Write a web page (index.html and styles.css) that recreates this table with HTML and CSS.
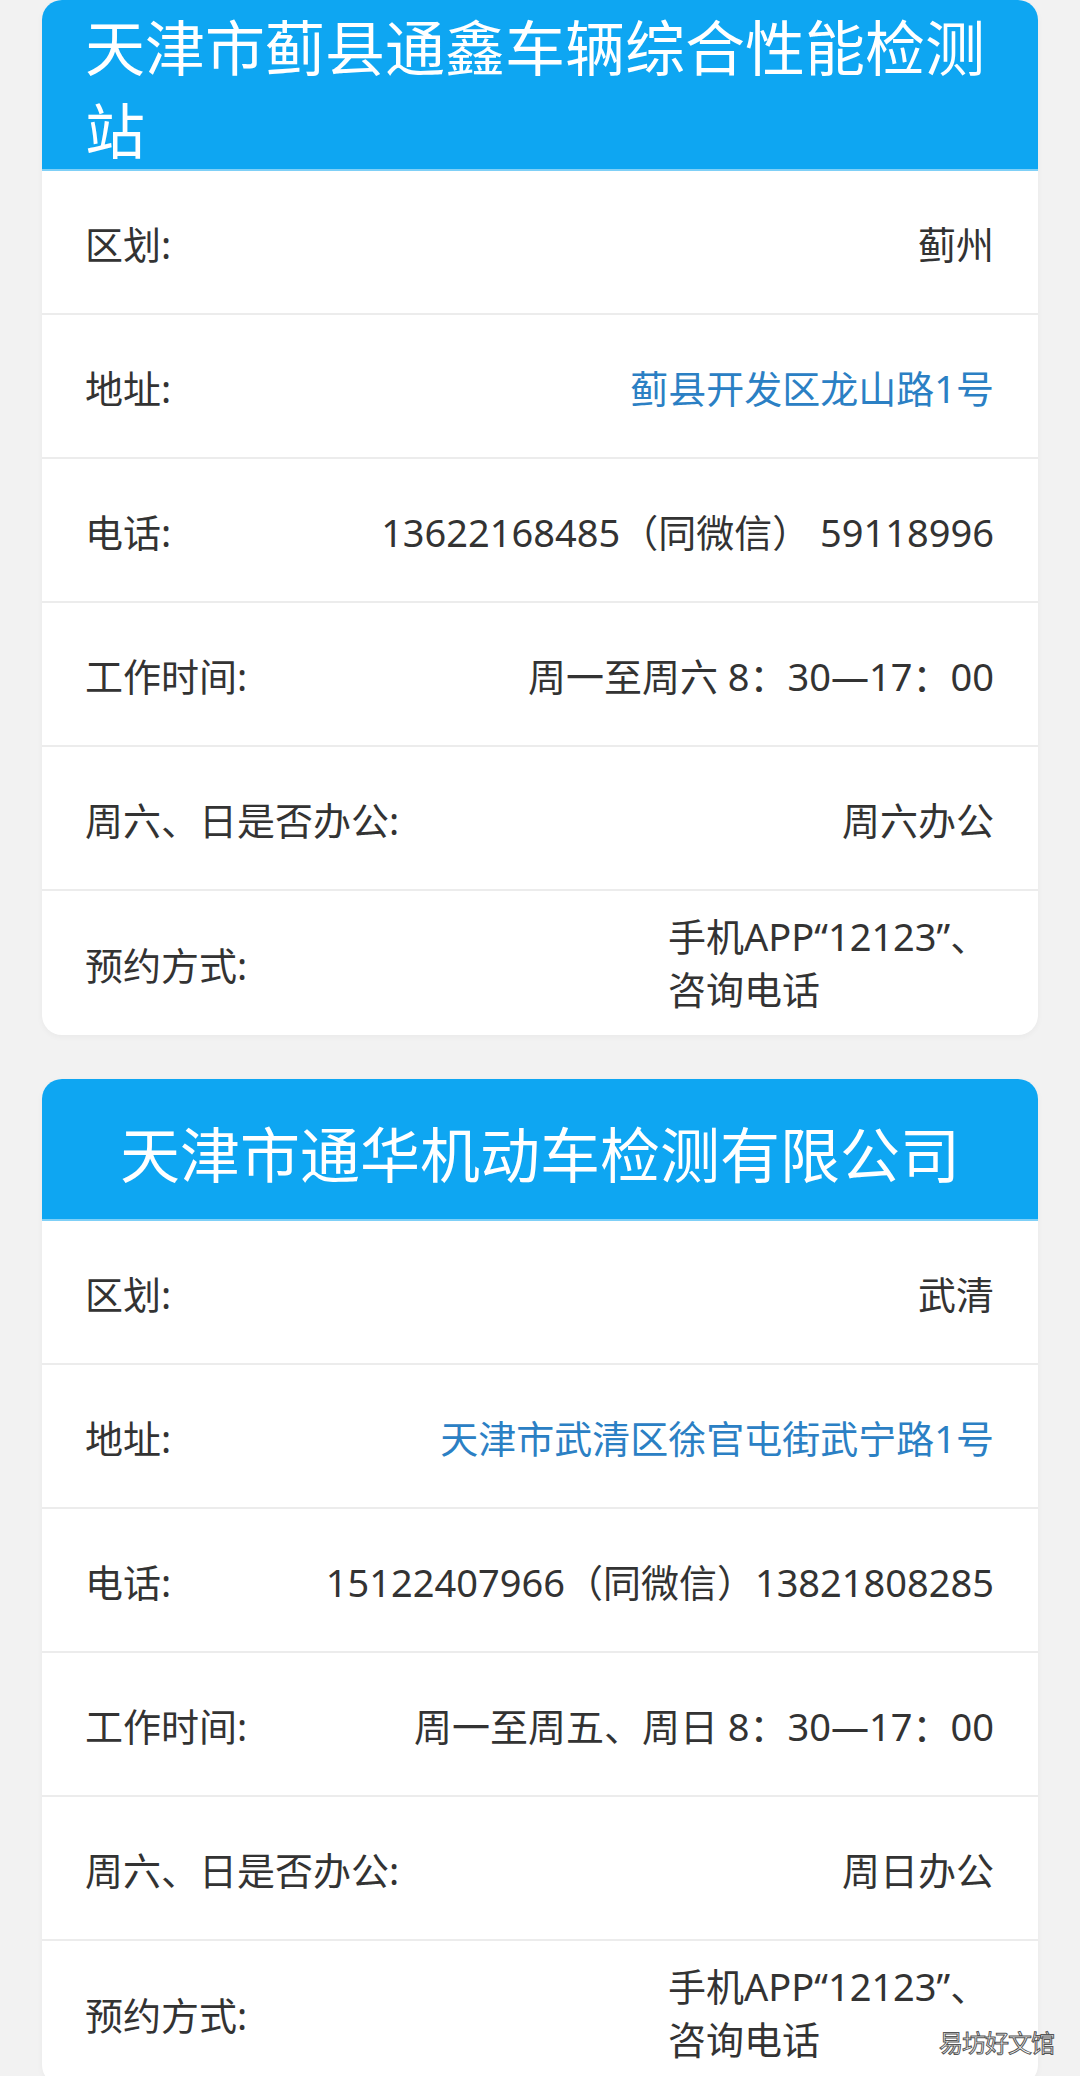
FILE: index.html
```html
<!DOCTYPE html>
<html lang="zh-CN">
<head>
    <meta charset="UTF-8">
    <meta name="viewport" content="width=device-width, initial-scale=1.0">
    <title>天津机动车检测站</title>
    <link rel="stylesheet" href="styles.css">
</head>
<body>
    <div class="list">
        <div class="station">
            <div class="station-title wrap">天津市蓟县通鑫车辆综合性能检测站</div>
            <div class="row"><span class="label">区划:</span><span class="value">蓟州</span></div>
            <div class="row"><span class="label">地址:</span><span class="value link">蓟县开发区龙山路1号</span></div>
            <div class="row"><span class="label">电话:</span><span class="value">13622168485（同微信） 59118996</span></div>
            <div class="row"><span class="label">工作时间:</span><span class="value">周一至周六 8：30—17：00</span></div>
            <div class="row"><span class="label">周六、日是否办公:</span><span class="value">周六办公</span></div>
            <div class="row"><span class="label">预约方式:</span><span class="value multi">手机APP“12123”、咨询电话</span></div>
        </div>

        <div class="station">
            <div class="station-title">天津市通华机动车检测有限公司</div>
            <div class="row"><span class="label">区划:</span><span class="value">武清</span></div>
            <div class="row"><span class="label">地址:</span><span class="value link">天津市武清区徐官屯街武宁路1号</span></div>
            <div class="row"><span class="label">电话:</span><span class="value">15122407966（同微信）13821808285</span></div>
            <div class="row"><span class="label">工作时间:</span><span class="value">周一至周五、周日 8：30—17：00</span></div>
            <div class="row"><span class="label">周六、日是否办公:</span><span class="value">周日办公</span></div>
            <div class="row"><span class="label">预约方式:</span><span class="value multi">手机APP“12123”、咨询电话</span></div>
        </div>
    </div>

    <div class="watermark">易坊好文馆</div>
</body>
</html>
```

FILE: styles.css
```css
body {
    margin: 0;
    background-color: #f2f2f2;
    font-family: "Noto Sans", "Noto Sans CJK SC", sans-serif;
    color: #333;
}

.list {
    display: flex;
    flex-direction: column;
    gap: 44px;
    padding: 0 42px;
}

.station {
    background-color: #fff;
    border-radius: 20px;
    overflow: hidden;
    box-shadow: 0 2px 6px rgba(0, 0, 0, 0.04);
}

.station-title {
    background-color: #0ea6f2;
    color: #fff;
    font-family: "Noto Sans CJK SC", sans-serif;
    font-size: 60px;
    height: 142px;
    padding-top: 6px;
    line-height: 134px;
    text-align: center;
    border-bottom: 2px solid #7fd0f7;
    box-sizing: border-box;
}

/* long names wrap onto a second line, left aligned */
.station-title.wrap {
    height: auto;
    padding: 3px 43px 0;
    line-height: 83px;
    text-align: left;
}

.row {
    display: flex;
    justify-content: space-between;
    align-items: center;
    height: 144px;
    padding: 0 44px 0 43px;
    border-bottom: 2px solid #ececec;
    box-sizing: border-box;
    font-size: 38px;
}

.row:last-child {
    border-bottom: none;
}

.label {
    white-space: nowrap;
}

.value {
    text-align: right;
}

.value.link {
    color: #2b80c4;
}

.value.multi {
    max-width: 326px;
    text-align: left;
    line-height: 53px;
}

.watermark {
    position: absolute;
    top: 2024px;
    right: 26px;
    font-family: "Noto Sans CJK SC", sans-serif;
    font-size: 24px;
    color: #fff;
    -webkit-text-stroke: 1px #555;
    letter-spacing: -1px;
}
```
